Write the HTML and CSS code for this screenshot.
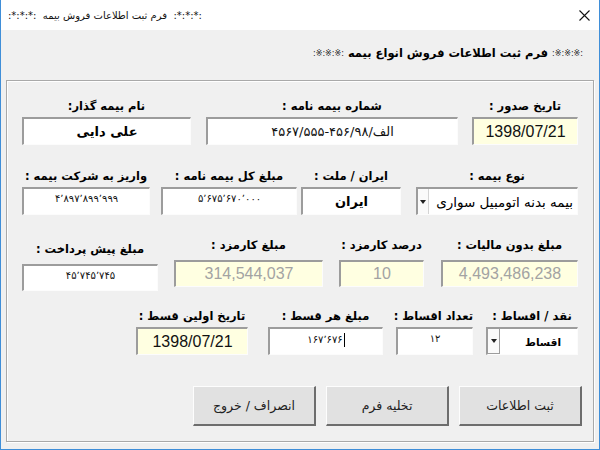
FILE: index.html
```html
<!DOCTYPE html>
<html lang="fa">
<head>
<meta charset="utf-8">
<title>فرم ثبت اطلاعات فروش بیمه</title>
<link rel="stylesheet" href="styles.css">
</head>
<body>
<div class="window">
  <div class="titlebar">
    <span class="title" dir="rtl">:*:*:*:&nbsp; فرم ثبت اطلاعات فروش بیمه &nbsp;:*:*:*:</span>
    <svg class="close" width="11" height="11" viewBox="0 0 11 11"><path d="M0.5 0.5L10.5 10.5M10.5 0.5L0.5 10.5" stroke="#111" stroke-width="1.1" fill="none"/></svg>
  </div>
  <div class="client">
    <div class="heading" dir="rtl"><span class="deco">:※:※:※:</span> فرم ثبت اطلاعات فروش انواع بیمه <span class="deco">:※:※:※:</span></div>
    <div class="group" dir="rtl">
      <div class="row r1">
        <div class="field f-issue">
          <div class="lbl">تاریخ صدور :</div>
          <div class="box info latin dark">1398/07/21</div>
        </div>
        <div class="field f-policy">
          <div class="lbl">شماره بیمه نامه :</div>
          <div class="box plain"><span dir="ltr">۴۵۶۷/۵۵۵-۴۵۶/۹۸/<span dir="rtl">الف</span></span></div>
        </div>
        <div class="field f-holder">
          <div class="lbl">نام بیمه گذار:</div>
          <div class="box strong">علی دایی</div>
        </div>
      </div>

      <div class="row r2">
        <div class="field f-type">
          <div class="lbl">نوع بیمه :</div>
          <div class="box combo">
            <span class="combo-text">بیمه بدنه اتومبیل سواری</span>
            <span class="arrow"><svg width="6" height="4" viewBox="0 0 6 4"><path d="M0 0H6L3 4Z" fill="#222"/></svg></span>
          </div>
        </div>
        <div class="field f-country">
          <div class="lbl">ایران / ملت :</div>
          <div class="box strong">ایران</div>
        </div>
        <div class="field f-total">
          <div class="lbl">مبلغ کل بیمه نامه :</div>
          <div class="box amount"><span dir="ltr">۵٬۶۷۵٬۶۷۰٬۰۰۰</span></div>
        </div>
        <div class="field f-deposit">
          <div class="lbl">واریز به شرکت بیمه :</div>
          <div class="box amount"><span dir="ltr">۴٬۸۹۷٬۸۹۹٬۹۹۹</span></div>
        </div>
      </div>

      <div class="row r3">
        <div class="field f-net">
          <div class="lbl">مبلغ بدون مالیات :</div>
          <div class="box info latin muted">4,493,486,238</div>
        </div>
        <div class="field f-pct">
          <div class="lbl">درصد کارمزد :</div>
          <div class="box info latin muted">10</div>
        </div>
        <div class="field f-fee">
          <div class="lbl">مبلغ کارمزد :</div>
          <div class="box info latin muted">314,544,037</div>
        </div>
        <div class="field f-prepay">
          <div class="lbl">مبلغ پیش پرداخت :</div>
          <div class="box amount"><span dir="ltr">۴۵٬۷۴۵٬۷۴۵</span></div>
        </div>
      </div>

      <div class="row r4">
        <div class="field f-mode">
          <div class="lbl">نقد / اقساط :</div>
          <div class="box combo">
            <span class="combo-text small-bold">اقساط</span>
            <span class="arrow boxed"><svg width="6" height="4" viewBox="0 0 6 4"><path d="M0 0H6L3 4Z" fill="#222"/></svg></span>
          </div>
        </div>
        <div class="field f-count">
          <div class="lbl">تعداد اقساط :</div>
          <div class="box amount"><span dir="ltr">۱۲</span></div>
        </div>
        <div class="field f-each">
          <div class="lbl">مبلغ هر قسط :</div>
          <div class="box amount"><span dir="ltr">۱۶۷٬۶۷۶<span class="caret"></span></span></div>
        </div>
        <div class="field f-first">
          <div class="lbl">تاریخ اولین قسط :</div>
          <div class="box info latin dark">1398/07/21</div>
        </div>
      </div>

      <div class="row buttons">
        <button class="btn">ثبت اطلاعات</button>
        <button class="btn">تخلیه فرم</button>
        <button class="btn">انصراف / خروج</button>
      </div>
    </div>
  </div>
</div>
</body>
</html>
```

FILE: styles.css
```css
* { box-sizing: border-box; }

html, body {
  margin: 0;
  padding: 0;
  background: #f0f0f0;
}

body {
  font-family: "DejaVu Sans", "Noto Sans", sans-serif;
  color: #000;
}

.window {
  width: 600px;
  height: 450px;
  border-left: 1px solid #3f8ed8;
  border-right: 1px solid #3f8ed8;
  border-bottom: 1px solid #3f8ed8;
  display: flex;
  flex-direction: column;
  overflow: hidden;
}

.titlebar {
  height: 30px;
  background: #fff;
  display: flex;
  align-items: center;
  justify-content: space-between;
  padding: 0 9px 0 7px;
  flex: none;
}

.title {
  font-size: 10px;
  color: #111;
}

.close { display: block; }

.client {
  flex: 1;
  background: #f0f0f0;
  display: flex;
  flex-direction: column;
}

.heading {
  height: 50px;
  padding: 15px 16px 0 0;
  font-size: 11.5px;
  font-weight: bold;
  line-height: 16px;
  text-align: right;
}

.deco {
  font-size: 8px;
  font-weight: normal;
  color: #222;
  vertical-align: 1px;
}

.group {
  height: 362px;
  margin: 0 5px 0 5px;
  border: 1px solid #a9a9a9;
  box-shadow: inset 1px 1px 0 #fff, 1px 1px 0 #fff;
  padding: 17px 15px 0 0;
}

.row {
  display: flex;
  align-items: flex-start;
}

.r2 { margin-top: 23px; }
.r3 { margin-top: 22px; }
.r4 { margin-top: 17px; }

.field {
  display: flex;
  flex-direction: column;
  flex: none;
}

.lbl {
  font-size: 11.5px;
  font-weight: bold;
  line-height: 16px;
  height: 16px;
  margin-bottom: 3px;
  text-align: center;
  white-space: nowrap;
}

.r3 .lbl { margin-bottom: 7px; }

.box {
  height: 28px;
  border-style: solid;
  border-width: 2px 1px 1px 2px;
  border-color: #9c9c9c #fcfcfc #fcfcfc #9c9c9c;
  background: #fff;
  display: flex;
  align-items: center;
  justify-content: center;
  white-space: nowrap;
  overflow: hidden;
}

.r3 .box { height: 27px; }

.info { background: #ffffe1; }

.latin {
  font-family: "Liberation Sans", Arial, sans-serif;
  font-size: 16px;
}

.dark { color: #111; }
.muted { color: #a3a3a3; }

.plain { font-size: 13px; color: #111; }

.strong { font-size: 13px; font-weight: bold; }

.amount {
  font-size: 10px;
  align-items: flex-start;
  padding-top: 4px;
  color: #111;
}

.caret {
  display: inline-block;
  width: 1px;
  height: 14px;
  background: #000;
  margin-left: 1px;
  vertical-align: -4px;
}

.combo {
  justify-content: space-between;
  padding: 0;
}

.combo-text {
  font-size: 13.5px;
  padding-right: 4px;
}

.small-bold {
  font-size: 10.5px;
  font-weight: bold;
  padding-right: 16px;
}

.arrow {
  width: 11px;
  height: 100%;
  display: flex;
  align-items: center;
  justify-content: center;
  border-right: 1px solid #d4d4d4;
  background: #fafafa;
}

.arrow.boxed {
  width: 12px;
  border-right: 1px solid #9c9c9c;
  border-bottom: 1px solid #9c9c9c;
}

/* field widths and spacing (RTL: margin-right is the gap to the previous field) */
.f-issue   { width: 106px; }
.f-policy  { width: 252px; margin-right: 14px; }
.f-holder  { width: 169px; margin-right: 15px; }

.f-type    { width: 162px; }
.f-country { width: 100px; margin-right: 15px; }
.f-total   { width: 136px; margin-right: 4px; }
.f-deposit { width: 128px; margin-right: 11px; }

.f-net     { width: 137px; }
.f-pct     { width: 85px;  margin-right: 17px; }
.f-fee     { width: 149px; margin-right: 16px; }
.f-prepay  { width: 136px; margin-right: 16px; margin-top: 4px; }

.f-mode    { width: 92px; }
.f-count   { width: 77px;  margin-right: 13px; }
.f-each    { width: 115px; margin-right: 13px; }
.f-first   { width: 112px; margin-right: 20px; }

.buttons {
  margin-top: 31px;
  margin-right: -4px;
  gap: 10px;
}

.btn {
  width: 123px;
  height: 40px;
  font-family: "DejaVu Sans", sans-serif;
  font-size: 12.5px;
  color: #222;
  background: #e1e1e1;
  border-style: solid;
  border-width: 1px 2px 2px 1px;
  border-color: #fdfdfd #6d6d6d #6d6d6d #fdfdfd;
  padding: 0;
}
```
